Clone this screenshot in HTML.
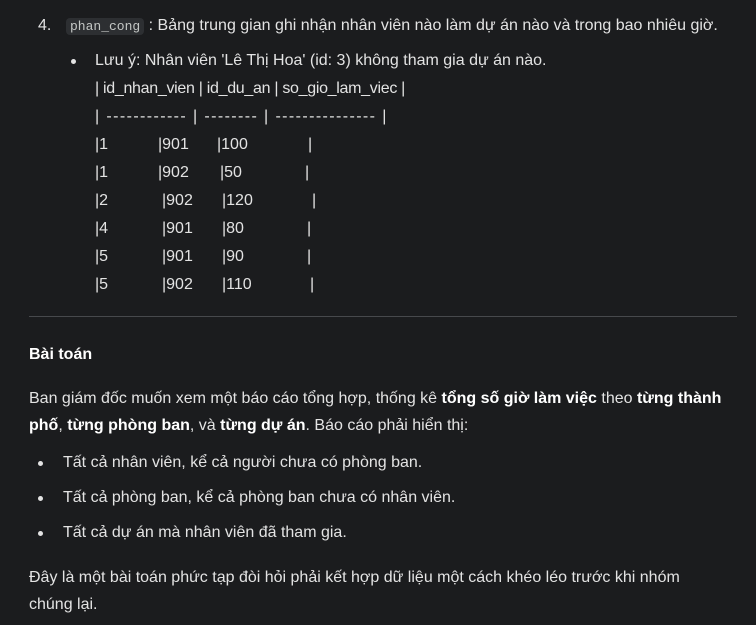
<!DOCTYPE html>
<html><head><meta charset="utf-8"><style>
body{margin:0;width:756px;height:625px;background:#1b1c1e;color:#e3e3e3;font-family:"Liberation Sans",sans-serif;font-size:16px;overflow:hidden;position:relative}
.a{position:absolute;white-space:nowrap;line-height:20px}
code{font-family:"Liberation Mono",monospace;font-size:13px;background:#2d2f32;color:#c4c7c5;border-radius:4px;padding:1px 4px}
.dot{position:absolute;width:5px;height:5px;border-radius:50%;background:#e3e3e3}
b{font-weight:bold;color:#fff}
</style></head><body>
<div class="a" style="left:38px;top:16px">4.</div>
<div class="a" style="left:66px;top:16px"><code>phan_cong</code> : Bảng trung gian ghi nhận nhân viên nào làm dự án nào và trong bao nhiêu giờ.</div>
<div class="dot" style="left:71px;top:59px"></div>
<div class="a" style="left:95px;top:51px">Lưu ý: Nhân viên 'Lê Thị Hoa' (id: 3) không tham gia dự án nào.</div>
<div class="a" style="left:95px;top:79px;letter-spacing:-0.3px">| id_nhan_vien | id_du_an | so_gio_lam_viec |</div>
<div class="a" style="left:95px;top:107px;letter-spacing:1.4px">| ------------ | -------- | --------------- |</div>

<div class="a" style="left:95px;top:135px">|1</div><div class="a" style="left:158px;top:135px">|901</div><div class="a" style="left:217px;top:135px">|100</div><div class="a" style="left:308px;top:135px">|</div>
<div class="a" style="left:95px;top:163px">|1</div><div class="a" style="left:158px;top:163px">|902</div><div class="a" style="left:220px;top:163px">|50</div><div class="a" style="left:305px;top:163px">|</div>
<div class="a" style="left:95px;top:191px">|2</div><div class="a" style="left:162px;top:191px">|902</div><div class="a" style="left:222px;top:191px">|120</div><div class="a" style="left:312px;top:191px">|</div>
<div class="a" style="left:95px;top:219px">|4</div><div class="a" style="left:162px;top:219px">|901</div><div class="a" style="left:222px;top:219px">|80</div><div class="a" style="left:307px;top:219px">|</div>
<div class="a" style="left:95px;top:247px">|5</div><div class="a" style="left:162px;top:247px">|901</div><div class="a" style="left:222px;top:247px">|90</div><div class="a" style="left:307px;top:247px">|</div>
<div class="a" style="left:95px;top:275px">|5</div><div class="a" style="left:162px;top:275px">|902</div><div class="a" style="left:222px;top:275px">|110</div><div class="a" style="left:310px;top:275px">|</div>

<div style="position:absolute;left:29px;top:316px;width:708px;height:1px;background:#47494c"></div>
<div class="a" style="left:29px;top:345px"><b>Bài toán</b></div>
<div class="a" style="left:29px;top:389px">Ban giám đốc muốn xem một báo cáo tổng hợp, thống kê <b>tổng số giờ làm việc</b> theo <b>từng thành</b></div>
<div class="a" style="left:29px;top:416px"><b>phố</b>, <b>từng phòng ban</b>, và <b>từng dự án</b>. Báo cáo phải hiển thị:</div>
<div class="dot" style="left:38px;top:461px"></div>
<div class="a" style="left:63px;top:453px">Tất cả nhân viên, kể cả người chưa có phòng ban.</div>
<div class="dot" style="left:38px;top:496px"></div>
<div class="a" style="left:63px;top:488px">Tất cả phòng ban, kể cả phòng ban chưa có nhân viên.</div>
<div class="dot" style="left:38px;top:531px"></div>
<div class="a" style="left:63px;top:523px">Tất cả dự án mà nhân viên đã tham gia.</div>
<div class="a" style="left:29px;top:568px">Đây là một bài toán phức tạp đòi hỏi phải kết hợp dữ liệu một cách khéo léo trước khi nhóm</div>
<div class="a" style="left:29px;top:595px">chúng lại.</div>
</body></html>
